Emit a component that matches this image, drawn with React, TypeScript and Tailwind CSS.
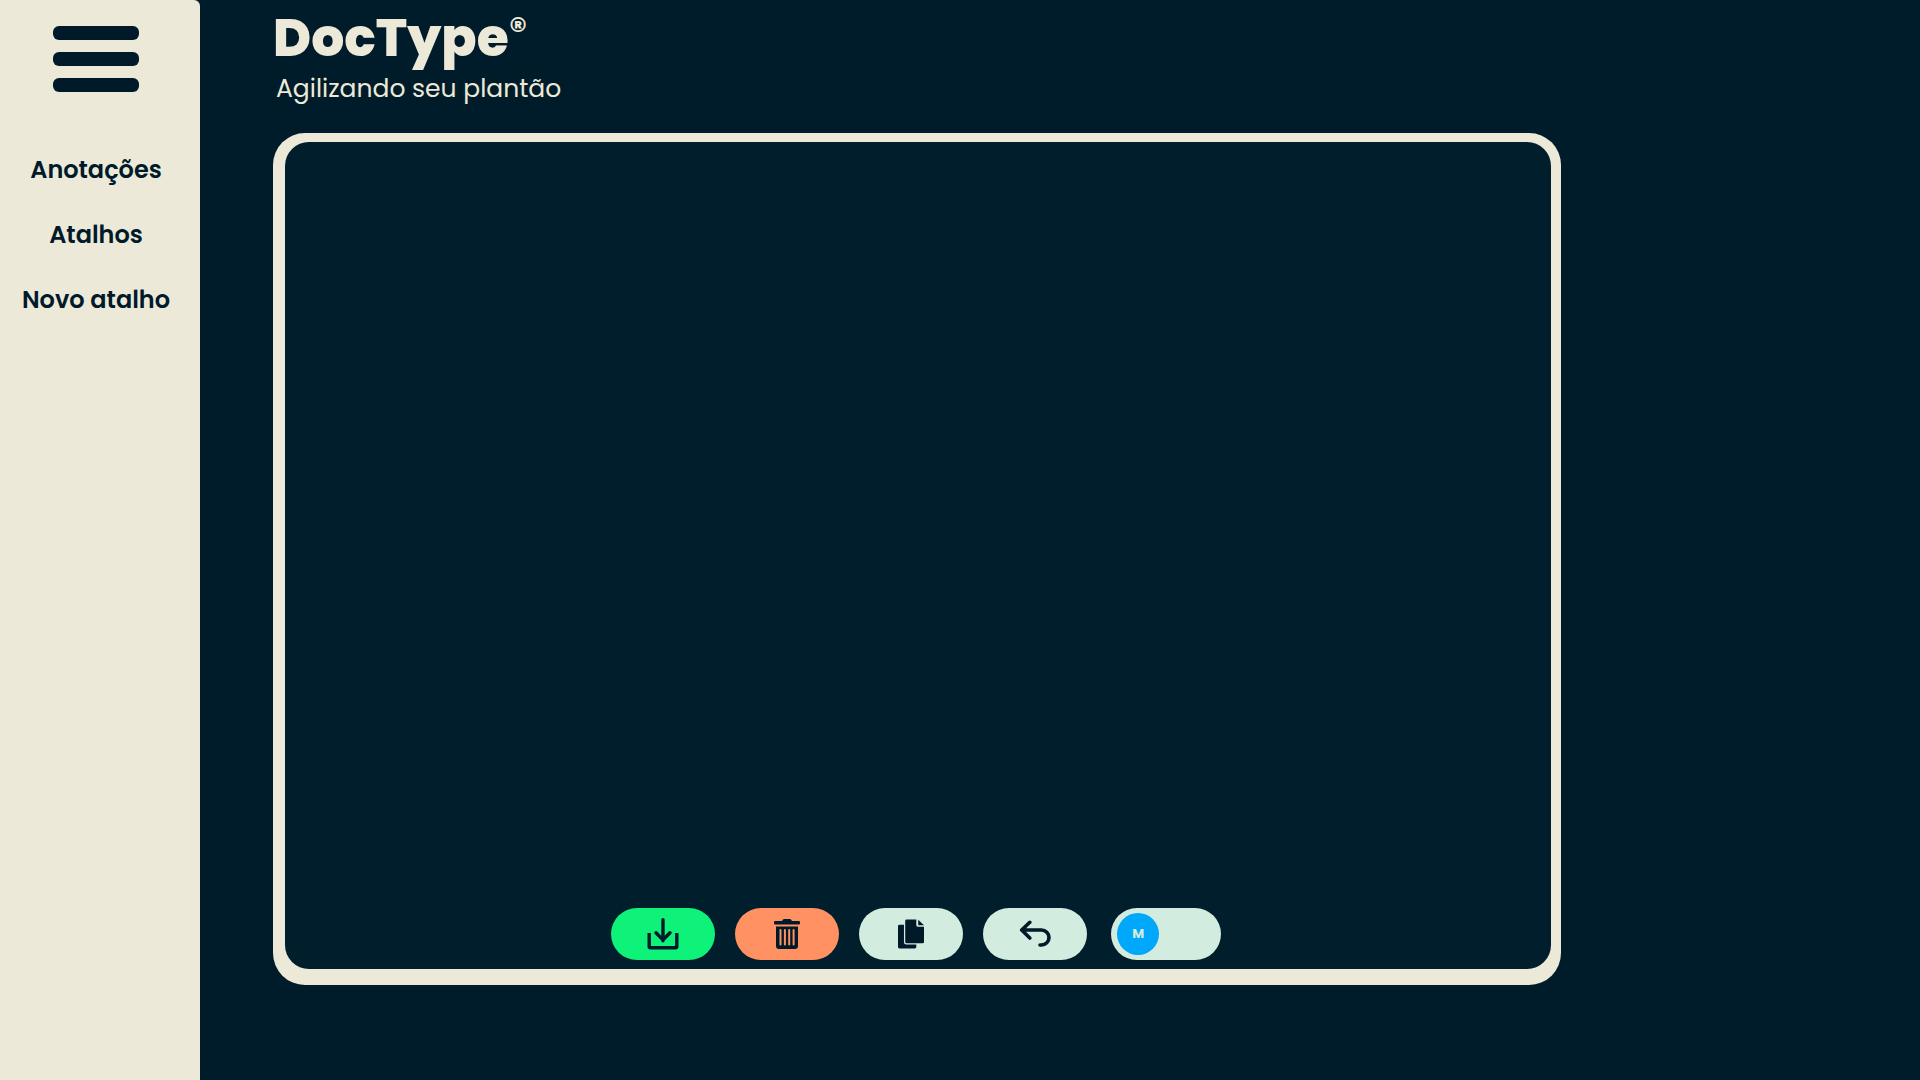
const pill =
  'flex h-[52px] w-[104px] items-center justify-center rounded-[26px] text-[#001a29]';

function DownloadIcon() {
  return (
    <svg width="32" height="32" viewBox="0 0 32 32" fill="none" stroke="currentColor" strokeWidth="3.4" aria-hidden="true">
      <path d="M2.2 15.1V28.500a1.200 1.200 0 0 0 1.200 1.200h25.200a1.200 1.200 0 0 0 1.200-1.200V15.100" />
      <path d="M16 1.700v21M9 14.700l7 7.200 7-7.200" strokeLinecap="round" />
    </svg>
  );
}

function TrashIcon() {
  return (
    <svg width="26" height="30" viewBox="0 0 26 30" fill="currentColor" aria-hidden="true">
      <path d="M1.200 2H8l1-1.400A1.300 1.300 0 0 1 10 0h6a1.300 1.300 0 0 1 1 .6L18 2h6.800A1.200 1.200 0 0 1 26 3.200v1A1.200 1.200 0 0 1 24.800 5.400H1.200A1.200 1.200 0 0 1 0 4.200v-1A1.200 1.200 0 0 1 1.200 2z" />
      <path
        fillRule="evenodd"
        d="M2 7.500h22V27a3 3 0 0 1-3 3H5a3 3 0 0 1-3-3zM5.500 11v14.500a1 1 0 0 0 2 0V11a1 1 0 0 0-2 0zM9.900 11v14.500a1 1 0 0 0 2 0V11a1 1 0 0 0-2 0zM14.200 11v14.500a1 1 0 0 0 2 0V11a1 1 0 0 0-2 0zM18.600 11v14.500a1 1 0 0 0 2 0V11a1 1 0 0 0-2 0z"
      />
    </svg>
  );
}

function CopyIcon() {
  return (
    <svg width="26" height="30" viewBox="0 0 27 30" fill="currentColor" aria-hidden="true">
      <path d="M1.500 5.500H6.200V23.500A2.500 2.500 0 0 0 8.700 26H19v2.500a1.500 1.500 0 0 1-1.500 1.500h-16A1.500 1.500 0 0 1 0 28.500V7A1.500 1.500 0 0 1 1.500 5.500z" />
      <path d="M9 0h10v6a1.500 1.500 0 0 0 1.500 1.500h6.500v15.700a1.500 1.500 0 0 1-1.500 1.500H9a1.500 1.500 0 0 1-1.500-1.500V1.500A1.500 1.500 0 0 1 9 0z" />
      <path d="M21 .2 27 6H21z" />
    </svg>
  );
}

function UndoIcon() {
  return (
    <svg width="32" height="28" viewBox="0 0 32 28" fill="none" stroke="currentColor" strokeWidth="3.6" strokeLinecap="round" strokeLinejoin="round" aria-hidden="true">
      <path d="M10.800 2.300 2.700 10l8.100 8M3 10h19.500a7.500 7.500 0 0 1 0 15H21" />
    </svg>
  );
}

const links = ['Anotações', 'Atalhos', 'Novo atalho'];

export default function App() {
  return (
    <div className="flex min-h-screen bg-[#001c2a] font-['Poppins','Inter',sans-serif] text-[#ece9d9]">
      <aside className="flex w-[200px] shrink-0 flex-col items-center rounded-tr-md bg-[#ece9d9] pt-[26px] pr-2 text-[#001a29]">
        <button type="button" aria-label="Menu" className="flex w-[86px] flex-col gap-3">
          <span className="h-[14px] w-full rounded-md bg-[#001a29]" />
          <span className="h-[14px] w-full rounded-md bg-[#001a29]" />
          <span className="h-[14px] w-full rounded-md bg-[#001a29]" />
        </button>
        <nav className="mt-[60px] flex flex-col items-center gap-[29px]">
          {links.map((label) => (
            <a key={label} href="#" className="text-2xl leading-9 font-semibold whitespace-nowrap">
              {label}
            </a>
          ))}
        </nav>
      </aside>

      <main className="flex-1 pt-2">
        <header className="ml-[73px]">
          <h1 className="flex items-start text-[52px] leading-[60px] font-extrabold">
            DocType
            <span className="text-4xl leading-[44px] font-medium">®</span>
          </h1>
          <p className="ml-[3px] text-[25px] leading-[42px] font-normal">Agilizando seu plantão</p>
        </header>

        <section className="mt-[23px] ml-[73px] flex h-[78.9vh] w-[74.9%] flex-col rounded-[32px] bg-[#ece9d9] pt-[9px] pr-[10px] pb-4 pl-3">
          <div className="flex flex-1 flex-col rounded-3xl bg-[#001e2b] pb-[9px]">
            <textarea
              aria-label="Anotação"
              className="w-full flex-1 resize-none rounded-3xl bg-transparent p-6 text-2xl outline-none"
            />
            <div className="flex items-center justify-center gap-5 pr-1">
              <button type="button" aria-label="Salvar" className={`${pill} bg-[#0ef27a]`}>
                <DownloadIcon />
              </button>
              <button type="button" aria-label="Apagar" className={`${pill} bg-[#ff9162]`}>
                <TrashIcon />
              </button>
              <button type="button" aria-label="Copiar" className={`${pill} bg-[#d3ece0]`}>
                <CopyIcon />
              </button>
              <button type="button" aria-label="Desfazer" className={`${pill} bg-[#d3ece0]`}>
                <UndoIcon />
              </button>
              <button
                type="button"
                role="switch"
                aria-checked="false"
                aria-label="Modo"
                className="ml-1 flex h-[52px] w-[110px] items-center rounded-[26px] bg-[#d3ece0] pl-[6px]"
              >
                <span className="flex size-[42px] items-center justify-center rounded-full bg-[#00a8fb] text-[13px] font-bold text-[#d3ece0]">
                  M
                </span>
              </button>
            </div>
          </div>
        </section>
      </main>
    </div>
  );
}
